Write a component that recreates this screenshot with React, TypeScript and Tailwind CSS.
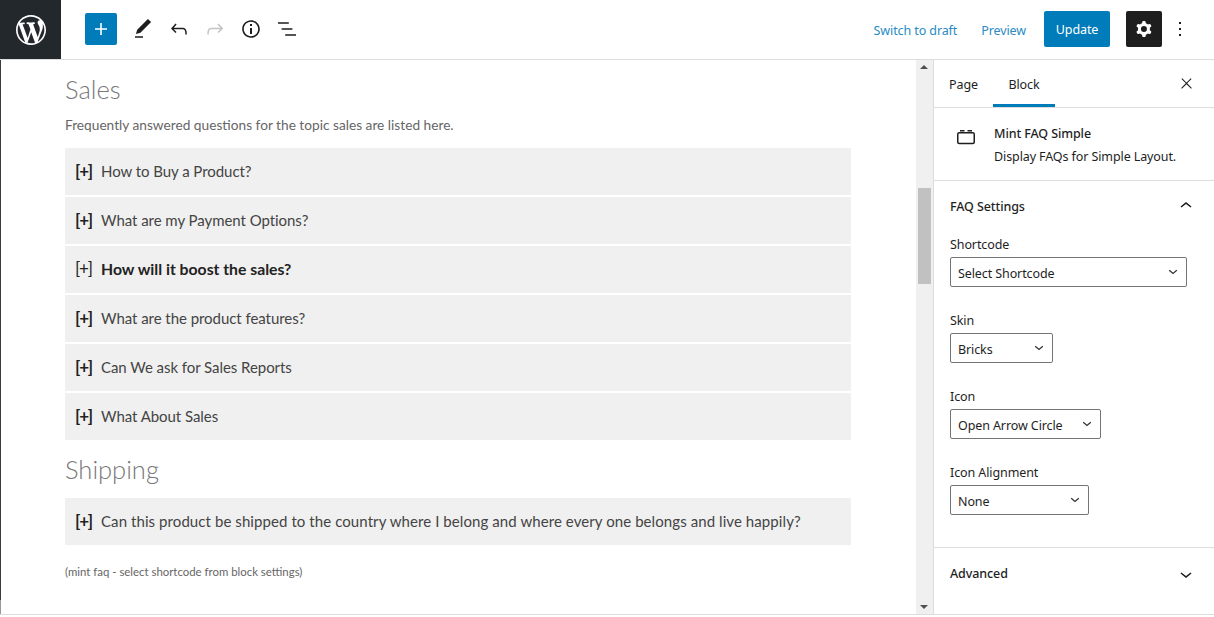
import React from "react";

const Ico = ({ d, size = 24, className = "" }: { d: string; size?: number; className?: string }) => (
  <svg width={size} height={size} viewBox="0 0 24 24" fill="currentColor" className={className}>
    <path d={d} fillRule="evenodd" clipRule="evenodd" />
  </svg>
);

const P = {
  plus: "M18 11.2h-5.2V6h-1.6v5.2H6v1.6h5.2V18h1.6v-5.2H18z",
  pen: "M20.1 5.1L16.9 2 6.2 12.7l-1.3 4.4 4.5-1.3L20.1 5.1zM4 20.8h8v-1.5H4v1.5z",
  undo: "M18.3 11.7c-.6-.6-1.4-.9-2.3-.9H6.7l2.9-3.3-1.1-1-4.5 5L8.5 16l1-1-2.7-2.7H16c.5 0 .9.2 1.3.5 1 1 1 3.4 1 4.5v.3h1.5v-.2c0-1.5 0-4.3-1.5-5.7z",
  redo: "M15.6 6.5l-1.1 1 2.9 3.3H8c-.9 0-1.7.3-2.3.9-1.4 1.5-1.4 4.2-1.4 5.6v.2h1.5v-.3c0-1.1 0-3.5 1-4.5.3-.3.7-.5 1.3-.5h9.2L14.5 15l1.1 1.1 4.6-4.6-4.6-5z",
  info: "M12 3.2c-4.8 0-8.8 3.9-8.8 8.8 0 4.8 3.9 8.8 8.8 8.8 4.8 0 8.8-3.9 8.8-8.8 0-4.8-4-8.8-8.8-8.8zm0 16c-4 0-7.2-3.3-7.2-7.2C4.8 8 8 4.8 12 4.8s7.2 3.3 7.2 7.2c0 4-3.2 7.2-7.2 7.2zM11 17h2v-6h-2v6zm0-8h2V7h-2v2z",
  list: "M13.8 5.2H3v1.5h10.8V5.2zm-3.6 12v1.5H21v-1.5H10.2zm7.2-6H6.6v1.5h10.8v-1.5z",
  cog: "M10.289 4.836A1 1 0 0111.275 4h1.306a1 1 0 01.987.836l.244 1.466c.787.26 1.503.679 2.108 1.218l1.393-.522a1 1 0 011.216.437l.653 1.13a1 1 0 01-.23 1.273l-1.148.944a6.025 6.025 0 010 2.435l1.149.946a1 1 0 01.23 1.272l-.653 1.13a1 1 0 01-1.216.437l-1.394-.522c-.605.54-1.32.958-2.108 1.218l-.244 1.466a1 1 0 01-.987.836h-1.306a1 1 0 01-.986-.836l-.244-1.466a5.995 5.995 0 01-2.108-1.218l-1.394.522a1 1 0 01-1.217-.436l-.653-1.131a1 1 0 01.23-1.272l1.149-.946a6.026 6.026 0 010-2.435l-1.148-.944a1 1 0 01-.23-1.272l.653-1.131a1 1 0 011.217-.437l1.393.522a5.994 5.994 0 012.108-1.218l.244-1.466zM14.929 12a3 3 0 11-6 0 3 3 0 016 0z",
  more: "M13 19h-2v-2h2v2zm0-6h-2v-2h2v2zm0-6h-2V5h2v2z",
  close: "M13 11.8l6.1-6.3-1-1-6.1 6.2-6.1-6.2-1 1 6.1 6.3-6.5 6.7 1 1 6.5-6.6 6.5 6.6 1-1z",
  up: "M6.5 12.4L12 8l5.5 4.4-.9 1.2L12 10l-4.5 3.6-1-1.2z",
  down: "M17.5 11.6L12 16l-5.5-4.4.9-1.2L12 14l4.5-3.6 1 1.2z",
};

const Row = ({ text, bold = false, long = false }: { text: string; bold?: boolean; long?: boolean }) => (
  <div className={`flex h-[47px] items-center bg-[#f0f0f0] pl-[10px] text-[15px] text-[#444] ${long ? "tracking-[0.08px]" : "tracking-[-0.05px]"}`}>
    <span className={`mb-[1px] w-[26px] shrink-0 text-[17px] tracking-[-1.2px] text-[#222] ${bold ? "font-normal" : "font-bold"}`}>[+]</span>
    <span className={bold ? "mb-[1px] text-[15.75px] font-bold tracking-normal text-[#222]" : ""}>{text}</span>
  </div>
);

const Field = ({ label, value, width, className = "" }: { label: string; value: string; width: string; className?: string }) => (
  <div className={className}>
    <div className="mb-[4px] h-[18px] pt-[1px] leading-[18px] text-[#1e1e1e]">{label}</div>
    <div className={`flex h-[30px] items-center justify-between rounded-[2px] border border-[#757575] pl-[7px] pr-[8px] text-[#1e1e1e] ${width}`}>
      <span className="pt-[4px]">{value}</span>
      <svg width="10" height="6" viewBox="0 0 10 6" fill="none" stroke="#333" strokeWidth="1.3"><path d="M1.2 1.2L5 4.4l3.8-3.2" /></svg>
    </div>
  </div>
);

export default function App() {
  return (
    <div className="flex h-[617px] w-[1214px] flex-col overflow-hidden bg-white font-['Noto_Sans','Open_Sans',sans-serif]">
      <header className="flex h-[60px] shrink-0 items-center border-b border-[#ddd] bg-white">
        <div className="flex h-[59px] w-[61px] items-center justify-center bg-[#23282d] text-white">
          <svg width="36" height="36" viewBox="-2 -2 24 24" fill="currentColor">
            <path d="M20 10c0-5.51-4.49-10-10-10C4.48 0 0 4.49 0 10c0 5.52 4.48 10 10 10 5.51 0 10-4.48 10-10zM7.78 15.37L4.37 6.22c.55-.02 1.17-.08 1.17-.08.5-.06.44-1.13-.06-1.11 0 0-1.45.11-2.37.11-.18 0-.37 0-.58-.01C4.12 2.69 6.87 1.11 10 1.11c2.33 0 4.45.87 6.05 2.34-.68-.11-1.65.39-1.65 1.58 0 .74.45 1.36.9 2.1.35.61.55 1.36.55 2.46 0 1.49-1.4 5-1.4 5l-3.03-8.37c.54-.02.82-.17.82-.17.5-.05.44-1.25-.06-1.22 0 0-1.44.12-2.38.12-.87 0-2.33-.12-2.33-.12-.5-.03-.56 1.2-.06 1.22l.92.08 1.26 3.41zM17.41 10c.24-.64.74-1.87.43-4.25.7 1.29 1.05 2.71 1.05 4.25 0 3.29-1.73 6.24-4.4 7.78.97-2.59 1.94-5.2 2.92-7.78zM6.1 18.09C3.12 16.65 1.11 13.53 1.11 10c0-1.3.23-2.48.72-3.59C3.25 10.3 4.67 14.2 6.1 18.09zm4.03-6.63l2.58 6.98c-.86.29-1.76.45-2.71.45-.79 0-1.57-.11-2.29-.33.81-2.38 1.62-4.74 2.42-7.1z" />
          </svg>
        </div>
        <div className="mb-[1px] ml-[24px] flex h-[32px] w-[32px] items-center justify-center rounded-[2px] bg-[#007cba] text-white">
          <Ico d={P.plus} />
        </div>
        <div className="mb-[1px] ml-[14px] flex items-center gap-[12px] text-[#1e1e1e]">
          <Ico d={P.pen} />
          <Ico d={P.undo} />
          <Ico d={P.redo} className="text-[#c4c4c4]" />
          <Ico d={P.info} />
          <Ico d={P.list} />
        </div>
        <div className="mb-[1px] ml-auto flex items-center text-[12.5px] tracking-[-0.1px]">
          <span className="pt-[4px] text-[#2a8bc4]">Switch to draft</span>
          <span className="ml-[24px] pt-[4px] text-[#2a8bc4]">Preview</span>
          <div className="ml-[18px] flex h-[36px] w-[66px] items-center justify-center rounded-[2px] bg-[#007cba] pt-[3px] text-white">Update</div>
          <div className="ml-[16px] flex h-[36px] w-[36px] items-center justify-center rounded-[2px] bg-[#1e1e1e] text-white">
            <Ico d={P.cog} />
          </div>
          <div className="ml-[6px] mr-[22px] text-[#1e1e1e]"><Ico d={P.more} /></div>
        </div>
      </header>

      <div className="flex h-[555px] shrink-0 border-b border-[#ddd]">
        <main className="relative w-[916px] shrink-0 border-l border-[#999] pl-[64px] font-['Lato',sans-serif] text-[#666]">
          <div className="absolute -left-[1px] top-0 h-[540px] w-[1px] bg-[#3c3c3c]" />
          <div className="w-[786px]">
            <h2 className="mt-[13px] h-[33px] text-[25.5px] font-light leading-[33px] text-[#777]">Sales</h2>
            <p className="mt-[9px] h-[20px] text-[13.7px] leading-[20px]">Frequently answered questions for the topic sales are listed here.</p>
            <div className="mt-[13px] flex flex-col gap-[2px]">
              <Row text="How to Buy a Product?" />
              <Row text="What are my Payment Options?" />
              <Row text="How will it boost the sales?" bold />
              <Row text="What are the product features?" />
              <Row text="Can We ask for Sales Reports" />
              <Row text="What About Sales" />
            </div>
            <h2 className="mt-[13px] h-[33px] text-[25.5px] font-light leading-[33px] text-[#777]">Shipping</h2>
            <div className="mt-[12px]">
              <Row long text="Can this product be shipped to the country where I belong and where every one belongs and live happily?" />
            </div>
            <p className="mt-[19px] text-[11.4px] leading-[16px]">(mint faq - select shortcode from block settings)</p>
          </div>
        </main>

        <div className="relative w-[17px] shrink-0 bg-[#f0f0f0]">
          <div className="absolute left-[2px] top-[128px] h-[96px] w-[13px] bg-[#c1c1c1]" />
          <div className="absolute left-[4px] top-[5px] h-0 w-0 border-x-[4px] border-b-[4px] border-x-transparent border-b-[#505050]" />
          <div className="absolute bottom-[5px] left-[4px] h-0 w-0 border-x-[4px] border-t-[4px] border-x-transparent border-t-[#505050]" />
        </div>

        <aside className="flex w-[281px] shrink-0 flex-col border-l border-[#ddd] text-[12.5px] tracking-[-0.1px] text-[#1e1e1e]">
          <div className="flex h-[48px] shrink-0 items-center border-b border-[#ddd]">
            <span className="ml-[15px] pt-[4px]">Page</span>
            <div className="ml-[15px] flex h-[47px] w-[62px] items-center justify-center border-b-[3px] border-[#007cba] pt-[7px]">Block</div>
            <Ico d={P.close} size={17} className="ml-auto mr-[19px]" />
          </div>
          <div className="flex h-[73px] shrink-0 border-b border-[#ddd] pl-[20px] pt-[16px]">
            <svg width="24" height="24" viewBox="0 0 24 24" fill="none" stroke="#1e1e1e" strokeWidth="1.5" className="mt-[1px] shrink-0">
              <rect x="3.75" y="7.75" width="16.5" height="10.75" rx="1.5" />
              <path d="M6 5.75h4.5M13.5 5.75h4.5" />
            </svg>
            <div className="ml-[16px]">
              <div className="h-[20px] font-medium leading-[20px]">Mint FAQ Simple</div>
              <div className="mt-[3px] leading-[20px]">Display FAQs for Simple Layout.</div>
            </div>
          </div>
          <div className="h-[367px] shrink-0 border-b border-[#ddd] pl-[16px]">
            <div className="flex h-[50px] items-center justify-between pr-[16px] font-medium">
              <span className="pt-[2px]">FAQ Settings</span>
              <Ico d={P.up} />
            </div>
            <Field label="Shortcode" value="Select Shortcode" width="w-[237px]" className="mt-[4px]" />
            <Field label="Skin" value="Bricks" width="w-[103px]" className="mt-[24px]" />
            <Field label="Icon" value="Open Arrow Circle" width="w-[151px]" className="mt-[24px]" />
            <Field label="Icon Alignment" value="None" width="w-[139px]" className="mt-[24px]" />
          </div>
          <div className="flex h-[52px] items-center justify-between pl-[16px] pr-[16px] font-medium">
            <span>Advanced</span>
            <Ico d={P.down} />
          </div>
        </aside>
      </div>
    </div>
  );
}
